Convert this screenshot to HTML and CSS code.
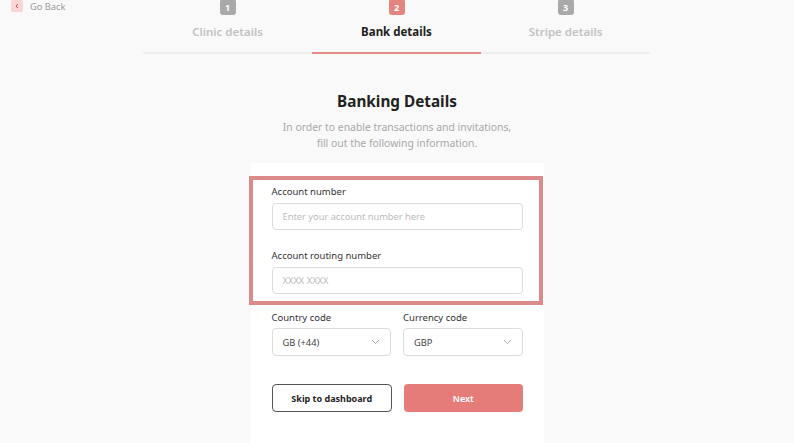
FILE: index.html
```html
<!DOCTYPE html>
<html lang="en">
<head>
  <meta charset="UTF-8">
  <meta name="viewport" content="width=device-width, initial-scale=1.0">
  <title>Banking Details</title>
  <link rel="stylesheet" href="styles.css">
</head>
<body>
  <div class="top">
    <a class="go-back" href="#">
      <span class="go-back-icon">
        <svg width="6" height="6" viewBox="0 0 6 6"><path d="M3.8 1 L2 3 L3.8 5" fill="none" stroke="#b55" stroke-width="1"/></svg>
      </span>
      Go Back
    </a>

    <div class="stepper">
      <div class="step">
        <span class="badge">1</span>
        <span class="step-label">Clinic details</span>
      </div>
      <div class="step active">
        <span class="badge">2</span>
        <span class="step-label">Bank details</span>
      </div>
      <div class="step">
        <span class="badge">3</span>
        <span class="step-label">Stripe details</span>
      </div>
    </div>
  </div>

  <main class="content">
    <h1>Banking Details</h1>
    <p class="intro">In order to enable transactions and invitations,<br>fill out the following information.</p>

    <div class="card">
      <div class="highlight">
        <label class="field-label">Account number</label>
        <div class="input">Enter your account number here</div>

        <label class="field-label second">Account routing number</label>
        <div class="input">XXXX XXXX</div>
      </div>

      <div class="row">
        <div class="col">
          <label class="field-label">Country code</label>
          <div class="select">
            GB (+44)
            <svg width="9" height="6" viewBox="0 0 9 6"><path d="M1 1 L4.5 4.5 L8 1" fill="none" stroke="#aaa" stroke-width="1"/></svg>
          </div>
        </div>
        <div class="col">
          <label class="field-label">Currency code</label>
          <div class="select">
            GBP
            <svg width="9" height="6" viewBox="0 0 9 6"><path d="M1 1 L4.5 4.5 L8 1" fill="none" stroke="#aaa" stroke-width="1"/></svg>
          </div>
        </div>
      </div>

      <div class="row buttons">
        <button class="btn btn-outline">Skip to dashboard</button>
        <button class="btn btn-primary">Next</button>
      </div>
    </div>
  </main>
</body>
</html>
```

FILE: styles.css
```css
body {
  margin: 0;
  background-color: #f9f9f9;
  font-family: "Noto Sans", sans-serif;
  color: #222;
  overflow: hidden;
}

.top {
  display: grid;
  grid-template-columns: 143px 507px 1fr;
  margin-top: -1px;
}

.go-back {
  display: flex;
  align-items: center;
  gap: 7px;
  padding-left: 11px;
  height: 14px;
  font-size: 9.3px;
  color: #999;
  text-decoration: none;
}

.go-back-icon {
  width: 12px;
  height: 12px;
  border-radius: 2px;
  background: #fbd4d4;
  display: flex;
  align-items: center;
  justify-content: center;
}

.stepper {
  display: flex;
}

.step {
  flex: 1;
  display: flex;
  flex-direction: column;
  align-items: center;
  padding-bottom: 13px;
  border-bottom: 2px solid #eeeeee;
}

.step.active {
  border-bottom-color: #e38b88;
}

.badge {
  width: 16px;
  height: 16px;
  border-radius: 3px;
  background: #a9a9a9;
  color: #fff;
  font-size: 9px;
  font-weight: 700;
  display: flex;
  align-items: center;
  justify-content: center;
}

.step.active .badge {
  background: #e5847f;
}

.step-label {
  margin-top: 10px;
  font-size: 11.5px;
  font-weight: 600;
  line-height: 14px;
  color: #c2c2c2;
}

.step.active .step-label {
  color: #222;
  font-weight: 700;
}

.content {
  display: flex;
  flex-direction: column;
  align-items: center;
}

h1 {
  margin: 37px 0 0;
  font-size: 15.3px;
  line-height: 20px;
  font-weight: 700;
  color: #222;
}

.intro {
  margin: 8px 0 0;
  font-size: 10.4px;
  line-height: 16px;
  color: #a8a8a8;
  text-align: center;
}

.card {
  margin-top: 12px;
  width: 293px;
  height: 300px;
  box-sizing: border-box;
  background: #fff;
  padding: 13px 21px 0;
}

.highlight {
  margin: 0 -20px 0 -23px;
  border: 4px solid #dc8b8b;
  padding: 6px 16px 7px 19px;
}

.field-label {
  display: block;
  font-size: 9.5px;
  line-height: 12px;
  color: #333;
}

.field-label.second {
  margin-top: 20px;
}

.input,
.select {
  margin-top: 5px;
  height: 27px;
  box-sizing: border-box;
  border: 1px solid #dcdcdc;
  border-radius: 4px;
  padding: 0 10px;
  display: flex;
  align-items: center;
  font-size: 9.3px;
  color: #bcbcbc;
}

.row {
  display: flex;
  gap: 12px;
}

.col {
  flex: 1;
  margin-top: 7px;
}

.select {
  margin-top: 4px;
  height: 28px;
  justify-content: space-between;
  color: #444;
}

.buttons {
  margin-top: 28px;
}

.btn {
  flex: 1;
  height: 28px;
  border-radius: 4px;
  font-family: inherit;
  font-size: 9px;
  font-weight: 700;
  cursor: pointer;
}

.btn-outline {
  background: #fff;
  border: 1px solid #555;
  color: #222;
}

.btn-primary {
  background: #e67c79;
  border: none;
  color: #fff;
  font-weight: 600;
}
```
